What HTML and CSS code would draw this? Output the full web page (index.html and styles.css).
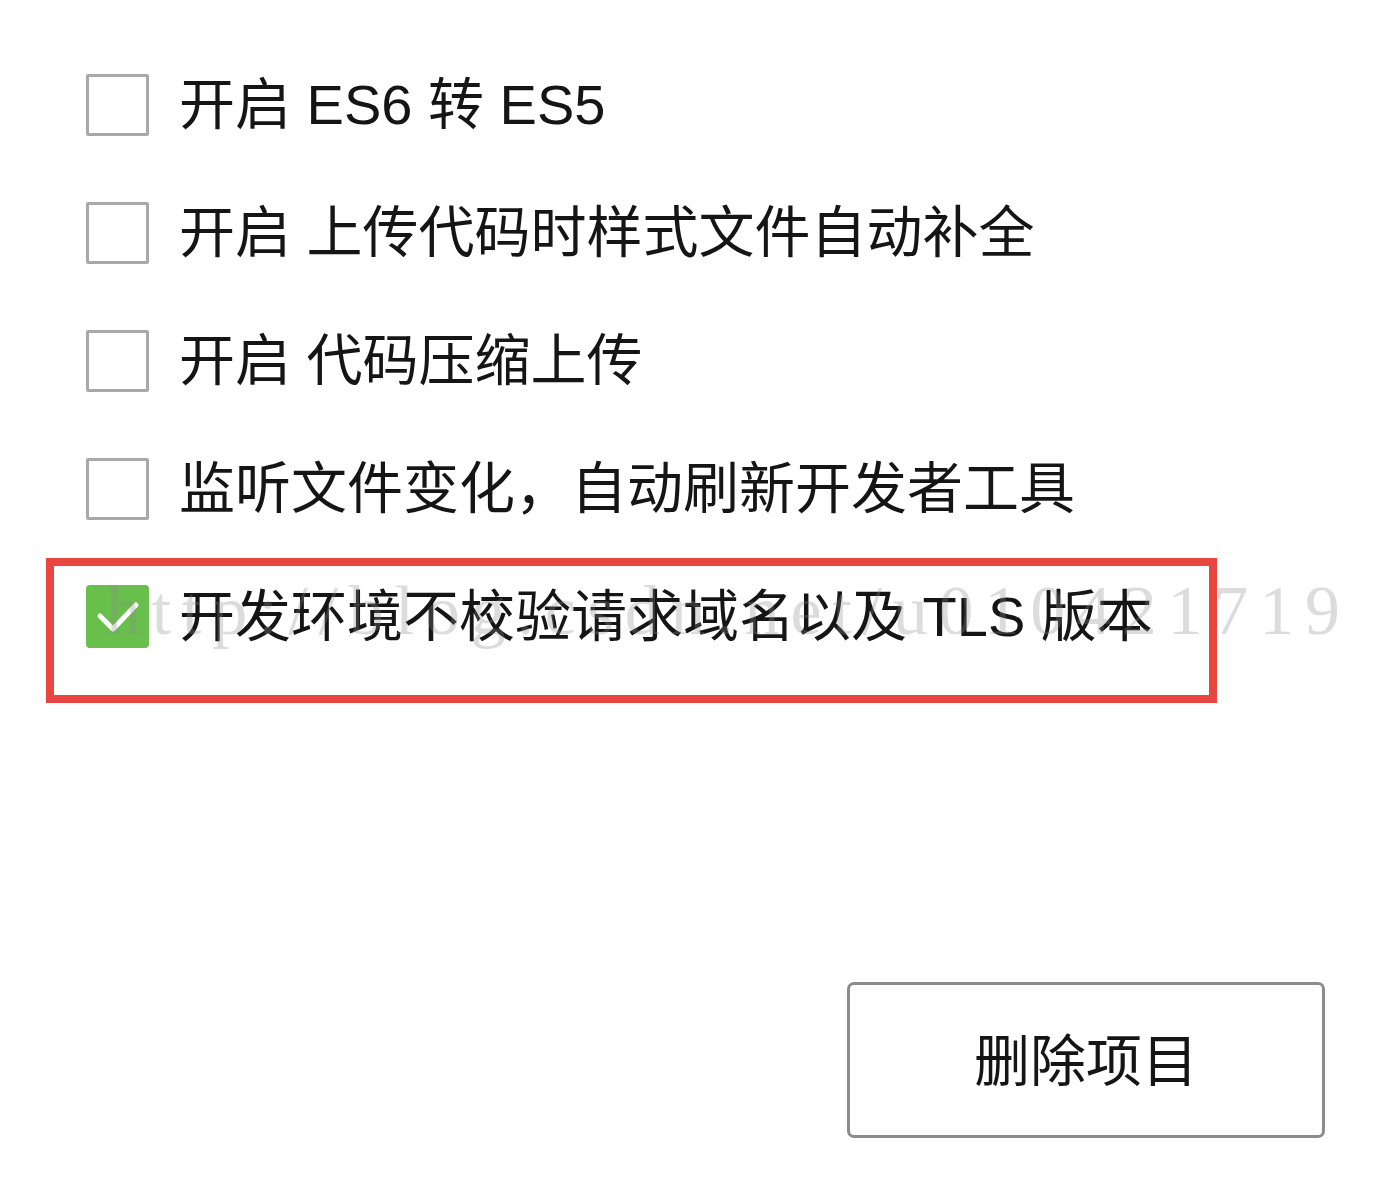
FILE: index.html
```html
<!DOCTYPE html>
<html lang="zh-CN">
<head>
<meta charset="utf-8">
<title>项目设置</title>
<link rel="stylesheet" href="styles.css">
</head>
<body>
<div class="page">
  <div class="options">
    <label class="row">
      <span class="box"></span>
      <span class="label">开启 ES6 转 ES5</span>
    </label>
    <label class="row">
      <span class="box"></span>
      <span class="label">开启 上传代码时样式文件自动补全</span>
    </label>
    <label class="row">
      <span class="box"></span>
      <span class="label">开启 代码压缩上传</span>
    </label>
    <label class="row">
      <span class="box"></span>
      <span class="label">监听文件变化，自动刷新开发者工具</span>
    </label>
    <div class="highlight">
      <label class="row row-checked">
        <span class="box box-checked">
          <svg viewBox="0 0 63 63" width="63" height="63" aria-hidden="true">
            <polyline points="14,31 27,44 50,20" fill="none" stroke="#ffffff" stroke-width="5" stroke-linecap="round" stroke-linejoin="round"/>
          </svg>
        </span>
        <span class="label">开发环境不校验请求域名以及 TLS 版本</span>
      </label>
    </div>
  </div>
  <div class="actions">
    <button class="btn" type="button">删除项目</button>
  </div>
  <div class="watermark">http://blog.csdn.net/u010421719</div>
</div>
</body>
</html>
```

FILE: styles.css
```css
html, body {
  margin: 0;
  padding: 0;
  background: #ffffff;
}

.page {
  position: relative;
  width: 1380px;
  height: 1180px;
  overflow: hidden;
  font-family: "Liberation Sans", "Noto Sans CJK SC", sans-serif;
  color: #151515;
}

.options {
  display: flex;
  flex-direction: column;
  padding: 41px 0 0 86px;
}

.row {
  display: flex;
  align-items: center;
  height: 128px;
  gap: 30px;
}

.box {
  box-sizing: border-box;
  width: 63px;
  height: 62px;
  border: 3px solid #a9a9a9;
  border-radius: 2px;
  background: #ffffff;
  flex: none;
  display: flex;
  align-items: center;
  justify-content: center;
}

.box-checked {
  border: none;
  background: #69bf4b;
  border-radius: 4px;
  height: 63px;
}

.label {
  font-size: 56px;
  line-height: 1;
  white-space: nowrap;
}

.highlight {
  box-sizing: border-box;
  margin: 5px 0 0 -40px;
  width: 1171px;
  height: 145px;
  border: 8px solid #e8463f;
  padding: 19px 0 0 32px;
}

.row-checked {
  height: 63px;
}

.actions {
  display: flex;
  justify-content: flex-end;
  padding: 279px 55px 0 0;
}

.btn {
  box-sizing: border-box;
  width: 478px;
  height: 156px;
  border: 3px solid #8c8c8c;
  border-radius: 7px;
  background: #ffffff;
  font-family: "Liberation Sans", "Noto Sans CJK SC", sans-serif;
  font-size: 56px;
  color: #151515;
  padding: 0 0 8px 0;
}

.watermark {
  position: absolute;
  left: 106px;
  top: 576px;
  font-family: "Liberation Serif", serif;
  font-size: 70px;
  line-height: 1;
  letter-spacing: 10.8px;
  color: rgba(140, 140, 140, 0.3);
  white-space: nowrap;
  pointer-events: none;
}
```
